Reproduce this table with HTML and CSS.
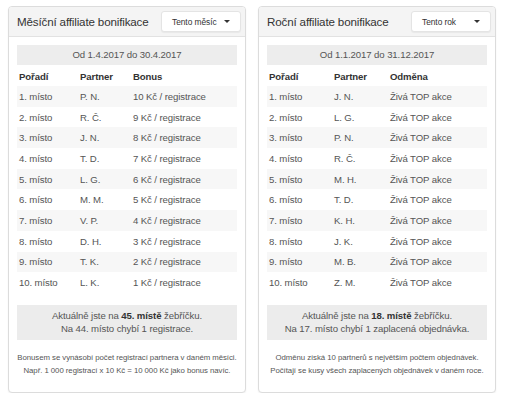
FILE: index.html
```html
<!DOCTYPE html>
<html lang="cs">
<head>
<meta charset="utf-8">
<title>Affiliate bonifikace</title>
<link rel="stylesheet" href="styles.css">
</head>
<body>
<div class="wrap">
  <section class="panel">
    <header class="panel-head">
      <h2 class="panel-title">Měsíční affiliate bonifikace</h2>
      <div class="select"><span>Tento měsíc</span><i class="caret"></i></div>
    </header>
    <div class="panel-body">
      <div class="range">Od 1.4.2017 do 30.4.2017</div>
      <table class="rank rank-month">
        <colgroup><col class="c1"><col class="c2"><col></colgroup>
        <thead><tr><th>Pořadí</th><th>Partner</th><th>Bonus</th></tr></thead>
        <tbody>
          <tr><td>1. místo</td><td>P. N.</td><td>10 Kč / registrace</td></tr>
          <tr><td>2. místo</td><td>R. Č.</td><td>9 Kč / registrace</td></tr>
          <tr><td>3. místo</td><td>J. N.</td><td>8 Kč / registrace</td></tr>
          <tr><td>4. místo</td><td>T. D.</td><td>7 Kč / registrace</td></tr>
          <tr><td>5. místo</td><td>L. G.</td><td>6 Kč / registrace</td></tr>
          <tr><td>6. místo</td><td>M. M.</td><td>5 Kč / registrace</td></tr>
          <tr><td>7. místo</td><td>V. P.</td><td>4 Kč / registrace</td></tr>
          <tr><td>8. místo</td><td>D. H.</td><td>3 Kč / registrace</td></tr>
          <tr><td>9. místo</td><td>T. K.</td><td>2 Kč / registrace</td></tr>
          <tr><td>10. místo</td><td>L. K.</td><td>1 Kč / registrace</td></tr>
        </tbody>
      </table>
      <div class="status">Aktuálně jste na <b>45. místě</b> žebříčku.<br>Na 44. místo chybí 1 registrace.</div>
      <p class="note">Bonusem se vynásobí počet registrací partnera v daném měsíci.<br>Např. 1 000 registrací x 10 Kč = 10 000 Kč jako bonus navíc.</p>
    </div>
  </section>
  <section class="panel">
    <header class="panel-head">
      <h2 class="panel-title">Roční affiliate bonifikace</h2>
      <div class="select"><span>Tento rok</span><i class="caret"></i></div>
    </header>
    <div class="panel-body">
      <div class="range">Od 1.1.2017 do 31.12.2017</div>
      <table class="rank rank-year">
        <colgroup><col class="c1"><col class="c2"><col></colgroup>
        <thead><tr><th>Pořadí</th><th>Partner</th><th>Odměna</th></tr></thead>
        <tbody>
          <tr><td>1. místo</td><td>J. N.</td><td>Živá TOP akce</td></tr>
          <tr><td>2. místo</td><td>L. G.</td><td>Živá TOP akce</td></tr>
          <tr><td>3. místo</td><td>P. N.</td><td>Živá TOP akce</td></tr>
          <tr><td>4. místo</td><td>R. Č.</td><td>Živá TOP akce</td></tr>
          <tr><td>5. místo</td><td>M. H.</td><td>Živá TOP akce</td></tr>
          <tr><td>6. místo</td><td>T. D.</td><td>Živá TOP akce</td></tr>
          <tr><td>7. místo</td><td>K. H.</td><td>Živá TOP akce</td></tr>
          <tr><td>8. místo</td><td>J. K.</td><td>Živá TOP akce</td></tr>
          <tr><td>9. místo</td><td>M. B.</td><td>Živá TOP akce</td></tr>
          <tr><td>10. místo</td><td>Z. M.</td><td>Živá TOP akce</td></tr>
        </tbody>
      </table>
      <div class="status">Aktuálně jste na <b>18. místě</b> žebříčku.<br>Na 17. místo chybí 1 zaplacená objednávka.</div>
      <p class="note">Odměnu získá 10 partnerů s největším počtem objednávek.<br>Počítají se kusy všech zaplacených objednávek v daném roce.</p>
    </div>
  </section>
</div>
</body>
</html>
```

FILE: styles.css
```css
* { box-sizing: border-box; }
html, body { background: #ffffff; }
body {
  margin: 0;
  padding: 6px 9px 0 8px;
  font-family: "Liberation Sans", Arial, sans-serif;
  color: #555;
}
.wrap {
  display: flex;
  gap: 12px;
}
.panel {
  width: 238px;
  border: 1px solid #dcdcdc;
  border-radius: 4px;
  background: #fff;
  box-shadow: 0 1px 2px rgba(0,0,0,0.06);
}
.panel-head {
  height: 30px;
  display: flex;
  align-items: center;
  justify-content: space-between;
  padding: 0 4px 0 8px;
  background: #f4f4f4;
  border-bottom: 1px solid #e2e2e2;
  border-radius: 3px 3px 0 0;
}
.panel-title {
  margin: 0;
  font-size: 11.6px;
  letter-spacing: -0.15px;
  font-weight: normal;
  color: #333;
}
.select {
  width: 80px;
  height: 21px;
  display: flex;
  align-items: center;
  justify-content: space-between;
  padding: 0 10px 0 10px;
  background: #fff;
  border: 1px solid #e4e4e4;
  border-radius: 3px;
  box-shadow: 0 1px 1px rgba(0,0,0,0.05);
  font-size: 8.4px;
  letter-spacing: -0.05px;
  color: #333;
}
.caret {
  width: 0;
  height: 0;
  border-left: 3px solid transparent;
  border-right: 3px solid transparent;
  border-top: 3px solid #333;
}
.panel-body {
  padding: 8px 8px 15px 8px;
}
.range {
  height: 20px;
  line-height: 20px;
  text-align: center;
  background: #ededed;
  font-size: 9.6px;
  letter-spacing: -0.1px;
  color: #555;
}
.rank {
  width: 100%;
  margin-top: 2px;
  border-collapse: collapse;
  font-size: 9.6px;
  letter-spacing: -0.1px;
}
.rank-month .c1 { width: 61px; }
.rank-month .c2 { width: 53px; }
.rank-year .c1 { width: 65px; }
.rank-year .c2 { width: 56px; }
.rank th {
  height: 19px;
  padding: 0 0 0 2px;
  text-align: left;
  font-weight: bold;
  color: #333;
}
.rank td {
  height: 20.7px;
  padding: 0 0 0 2px;
  color: #555;
}
.rank tbody tr:nth-child(odd) { background: #f7f7f7; }
.status {
  margin-top: 12px;
  padding: 4.5px 0;
  background: #ececec;
  text-align: center;
  font-size: 9.6px;
  letter-spacing: -0.1px;
  line-height: 13px;
  color: #555;
}
.status b { color: #333; }
.note {
  margin: 11.5px -4px 0 -4px;
  text-align: center;
  white-space: nowrap;
  font-size: 7.8px;
  letter-spacing: -0.05px;
  line-height: 13px;
  color: #555;
}
```
